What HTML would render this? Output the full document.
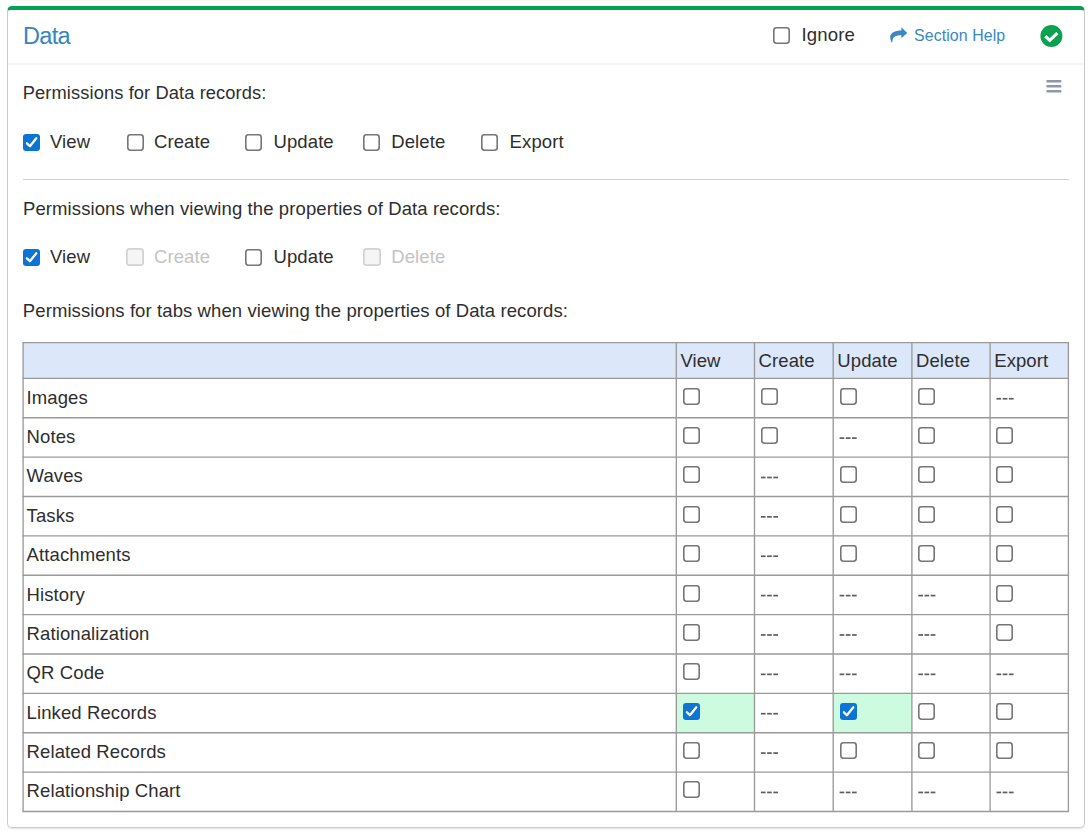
<!DOCTYPE html><html><head><meta charset="utf-8"><style>
html,body{margin:0;padding:0;background:#fff;width:1091px;height:835px;overflow:hidden;position:relative}
body{font-family:"Liberation Sans",sans-serif}
.t{position:absolute;white-space:nowrap;line-height:1;letter-spacing:0.1px}
.ic{position:absolute;display:block}
#card{position:absolute;left:7px;top:6px;width:1076px;height:817px;border:1px solid #cbcbcb;border-top:4px solid #04a152;border-radius:5px;box-shadow:0 1px 0 #ececec,0 2px 0 #f6f6f6}
#hdrline{position:absolute;left:8px;top:63px;width:1076px;height:2px;background:#f5f5f5}
#hr{position:absolute;left:23px;top:179px;width:1046px;height:1px;background:#d2d2d2}
.bar{position:absolute;left:1046.5px;width:15px;height:2.3px;background:#8990a6;border-radius:1px}
.cb{position:absolute;box-sizing:border-box;border:1.6px solid #767676;border-radius:3px;background:#fff}
.cb.dis{border-color:#d4d4d4;background:#f6f6f6}
.cb.on{border:none;background:#0b74d6}
.cb svg{display:block}
.dash{position:absolute;width:18px;height:1.4px;background:repeating-linear-gradient(90deg,#6a6a6a 0 5px,transparent 5px 6.5px)}
</style></head><body>
<div id="card"></div>
<div id="hdrline"></div>
<div class="t" style="left:23.00px;top:24.91px;font-size:23.5px;color:#3785bf;letter-spacing:-0.7px;">Data</div>
<svg class="ic" style="left:773px;top:27px" width="17" height="17" viewBox="0 0 17 17"><rect x="0.8" y="0.8" width="15.4" height="15.4" rx="2.6" fill="#fff" stroke="#767676" stroke-width="1.6"/></svg>
<div class="t" style="left:801.60px;top:25.86px;font-size:18.6px;color:#2e2e2e;">Ignore</div>
<svg class="ic" style="left:884px;top:22px" width="28" height="24" viewBox="0 0 28 24"><path d="M23.2 10.9 L17.4 5.3 L17.4 8.4 C11 8.4 6 10.5 6.2 15.5 C6.3 17.5 7 19.2 7.6 20.4 C8 20.6 8.4 20.4 8.4 20 C8.2 16 10.5 13.3 17.4 13.3 L17.4 16.2 Z" fill="#3a88c2"/></svg>
<div class="t" style="left:914.00px;top:27.54px;font-size:15.9px;color:#3a88c2;">Section Help</div>
<svg class="ic" style="left:1040px;top:25px" width="23" height="23" viewBox="0 0 23 23"><circle cx="11.4" cy="11" r="11" fill="#0aa24f"/><path d="M5.3 11.2 L9.7 15.3 L17.3 8.1" fill="none" stroke="#fff" stroke-width="3.2" stroke-linecap="butt" stroke-linejoin="miter"/></svg>
<svg class="ic" style="left:1040px;top:75px" width="30" height="22"><rect x="6.4" y="5.05" width="15" height="2.4" rx="0.6" fill="#8f97ab"/><rect x="6.4" y="10.05" width="15" height="2.4" rx="0.6" fill="#8f97ab"/><rect x="6.4" y="15.05" width="15" height="2.4" rx="0.6" fill="#8f97ab"/></svg>
<div style="position:absolute;left:11px;top:0;width:1070px;height:1px;background:#fafafa"></div>
<div class="t" style="left:22.80px;top:83.81px;font-size:18.3px;color:#2e2e2e;">Permissions for Data records:</div>
<div class="cb on" style="left:23px;top:134px;width:17px;height:17px"><svg width="17" height="17" viewBox="0 0 17 17"><path d="M3.9 9.3 L6.9 12.2 L13.3 4.3" fill="none" stroke="#fff" stroke-width="2.3" stroke-linecap="round" stroke-linejoin="round"/></svg></div>
<div class="t" style="left:50.00px;top:132.54px;font-size:18.5px;color:#2e2e2e;">View</div>
<svg class="ic" style="left:126.5px;top:134px" width="17" height="17" viewBox="0 0 17 17"><rect x="0.8" y="0.8" width="15.4" height="15.4" rx="2.6" fill="#fff" stroke="#767676" stroke-width="1.6"/></svg>
<div class="t" style="left:154.00px;top:132.54px;font-size:18.5px;color:#2e2e2e;">Create</div>
<svg class="ic" style="left:244.6px;top:134px" width="17" height="17" viewBox="0 0 17 17"><rect x="0.8" y="0.8" width="15.4" height="15.4" rx="2.6" fill="#fff" stroke="#767676" stroke-width="1.6"/></svg>
<div class="t" style="left:273.50px;top:132.54px;font-size:18.5px;color:#2e2e2e;">Update</div>
<svg class="ic" style="left:363.2px;top:134px" width="17" height="17" viewBox="0 0 17 17"><rect x="0.8" y="0.8" width="15.4" height="15.4" rx="2.6" fill="#fff" stroke="#767676" stroke-width="1.6"/></svg>
<div class="t" style="left:391.20px;top:132.54px;font-size:18.5px;color:#2e2e2e;">Delete</div>
<svg class="ic" style="left:481.3px;top:134px" width="17" height="17" viewBox="0 0 17 17"><rect x="0.8" y="0.8" width="15.4" height="15.4" rx="2.6" fill="#fff" stroke="#767676" stroke-width="1.6"/></svg>
<div class="t" style="left:509.60px;top:132.54px;font-size:18.5px;color:#2e2e2e;">Export</div>
<div id="hr"></div>
<div class="t" style="left:23.00px;top:199.74px;font-size:18.5px;color:#2e2e2e;">Permissions when viewing the properties of Data records:</div>
<div class="cb on" style="left:23px;top:249px;width:17px;height:17px"><svg width="17" height="17" viewBox="0 0 17 17"><path d="M3.9 9.3 L6.9 12.2 L13.3 4.3" fill="none" stroke="#fff" stroke-width="2.3" stroke-linecap="round" stroke-linejoin="round"/></svg></div>
<div class="t" style="left:50.00px;top:247.94px;font-size:18.5px;color:#2e2e2e;">View</div>
<svg class="ic" style="left:126px;top:248px" width="18" height="18" viewBox="0 0 17 17"><rect x="0.8" y="0.8" width="15.4" height="15.4" rx="2.6" fill="#f5f5f5" stroke="#d2d2d2" stroke-width="1.6"/></svg>
<div class="t" style="left:154.00px;top:247.94px;font-size:18.5px;color:#c4c4c4;">Create</div>
<svg class="ic" style="left:244.6px;top:249px" width="17" height="17" viewBox="0 0 17 17"><rect x="0.8" y="0.8" width="15.4" height="15.4" rx="2.6" fill="#fff" stroke="#767676" stroke-width="1.6"/></svg>
<div class="t" style="left:273.50px;top:247.94px;font-size:18.5px;color:#2e2e2e;">Update</div>
<svg class="ic" style="left:363px;top:248px" width="18" height="18" viewBox="0 0 17 17"><rect x="0.8" y="0.8" width="15.4" height="15.4" rx="2.6" fill="#f5f5f5" stroke="#d2d2d2" stroke-width="1.6"/></svg>
<div class="t" style="left:391.20px;top:247.94px;font-size:18.5px;color:#c4c4c4;">Delete</div>
<div class="t" style="left:22.80px;top:302.44px;font-size:18.5px;color:#2e2e2e;">Permissions for tabs when viewing the properties of Data records:</div>
<svg class="ic" style="left:0;top:0" width="1091" height="835" viewBox="0 0 1091 835"><rect x="23.1" y="342.6" width="1045.3000000000002" height="35.799999999999955" fill="#dce7fa"/><rect x="676.3" y="693.3599999999999" width="78.20000000000005" height="39.37" fill="#cdfbe0"/><rect x="833.2" y="693.3599999999999" width="78.69999999999993" height="39.37" fill="#cdfbe0"/><line x1="23.1" y1="342.6" x2="23.1" y2="811.47" stroke="#9a9a9a" stroke-width="1.35"/><line x1="676.3" y1="342.6" x2="676.3" y2="811.47" stroke="#9a9a9a" stroke-width="1.35"/><line x1="754.5" y1="342.6" x2="754.5" y2="811.47" stroke="#9a9a9a" stroke-width="1.35"/><line x1="833.2" y1="342.6" x2="833.2" y2="811.47" stroke="#9a9a9a" stroke-width="1.35"/><line x1="911.9" y1="342.6" x2="911.9" y2="811.47" stroke="#9a9a9a" stroke-width="1.35"/><line x1="990.1" y1="342.6" x2="990.1" y2="811.47" stroke="#9a9a9a" stroke-width="1.35"/><line x1="1068.4" y1="342.6" x2="1068.4" y2="811.47" stroke="#9a9a9a" stroke-width="1.35"/><line x1="22.425" y1="342.6" x2="1069.075" y2="342.6" stroke="#9a9a9a" stroke-width="1.35"/><line x1="22.425" y1="378.4" x2="1069.075" y2="378.4" stroke="#9a9a9a" stroke-width="1.35"/><line x1="22.425" y1="417.77" x2="1069.075" y2="417.77" stroke="#9a9a9a" stroke-width="1.35"/><line x1="22.425" y1="457.14" x2="1069.075" y2="457.14" stroke="#9a9a9a" stroke-width="1.35"/><line x1="22.425" y1="496.51" x2="1069.075" y2="496.51" stroke="#9a9a9a" stroke-width="1.35"/><line x1="22.425" y1="535.88" x2="1069.075" y2="535.88" stroke="#9a9a9a" stroke-width="1.35"/><line x1="22.425" y1="575.25" x2="1069.075" y2="575.25" stroke="#9a9a9a" stroke-width="1.35"/><line x1="22.425" y1="614.6199999999999" x2="1069.075" y2="614.6199999999999" stroke="#9a9a9a" stroke-width="1.35"/><line x1="22.425" y1="653.99" x2="1069.075" y2="653.99" stroke="#9a9a9a" stroke-width="1.35"/><line x1="22.425" y1="693.3599999999999" x2="1069.075" y2="693.3599999999999" stroke="#9a9a9a" stroke-width="1.35"/><line x1="22.425" y1="732.73" x2="1069.075" y2="732.73" stroke="#9a9a9a" stroke-width="1.35"/><line x1="22.425" y1="772.0999999999999" x2="1069.075" y2="772.0999999999999" stroke="#9a9a9a" stroke-width="1.35"/><line x1="22.425" y1="811.47" x2="1069.075" y2="811.47" stroke="#9a9a9a" stroke-width="1.35"/></svg>
<div class="t" style="left:680.40px;top:351.54px;font-size:18.5px;color:#2e2e2e;">View</div>
<div class="t" style="left:758.60px;top:351.54px;font-size:18.5px;color:#2e2e2e;">Create</div>
<div class="t" style="left:837.30px;top:351.54px;font-size:18.5px;color:#2e2e2e;">Update</div>
<div class="t" style="left:916.00px;top:351.54px;font-size:18.5px;color:#2e2e2e;">Delete</div>
<div class="t" style="left:994.20px;top:351.54px;font-size:18.5px;color:#2e2e2e;">Export</div>
<div class="t" style="left:26.60px;top:388.74px;font-size:18.5px;color:#2e2e2e;">Images</div>
<svg class="ic" style="left:683px;top:388px" width="17" height="17" viewBox="0 0 17 17"><rect x="0.8" y="0.8" width="15.4" height="15.4" rx="2.6" fill="#fff" stroke="#767676" stroke-width="1.6"/></svg>
<svg class="ic" style="left:761px;top:388px" width="17" height="17" viewBox="0 0 17 17"><rect x="0.8" y="0.8" width="15.4" height="15.4" rx="2.6" fill="#fff" stroke="#767676" stroke-width="1.6"/></svg>
<svg class="ic" style="left:840px;top:388px" width="17" height="17" viewBox="0 0 17 17"><rect x="0.8" y="0.8" width="15.4" height="15.4" rx="2.6" fill="#fff" stroke="#767676" stroke-width="1.6"/></svg>
<svg class="ic" style="left:918px;top:388px" width="17" height="17" viewBox="0 0 17 17"><rect x="0.8" y="0.8" width="15.4" height="15.4" rx="2.6" fill="#fff" stroke="#767676" stroke-width="1.6"/></svg>
<div class="t" style="left:26.60px;top:428.11px;font-size:18.5px;color:#2e2e2e;">Notes</div>
<svg class="ic" style="left:683px;top:427px" width="17" height="17" viewBox="0 0 17 17"><rect x="0.8" y="0.8" width="15.4" height="15.4" rx="2.6" fill="#fff" stroke="#767676" stroke-width="1.6"/></svg>
<svg class="ic" style="left:761px;top:427px" width="17" height="17" viewBox="0 0 17 17"><rect x="0.8" y="0.8" width="15.4" height="15.4" rx="2.6" fill="#fff" stroke="#767676" stroke-width="1.6"/></svg>
<svg class="ic" style="left:918px;top:427px" width="17" height="17" viewBox="0 0 17 17"><rect x="0.8" y="0.8" width="15.4" height="15.4" rx="2.6" fill="#fff" stroke="#767676" stroke-width="1.6"/></svg>
<svg class="ic" style="left:996px;top:427px" width="17" height="17" viewBox="0 0 17 17"><rect x="0.8" y="0.8" width="15.4" height="15.4" rx="2.6" fill="#fff" stroke="#767676" stroke-width="1.6"/></svg>
<div class="t" style="left:26.60px;top:467.48px;font-size:18.5px;color:#2e2e2e;">Waves</div>
<svg class="ic" style="left:683px;top:466px" width="17" height="17" viewBox="0 0 17 17"><rect x="0.8" y="0.8" width="15.4" height="15.4" rx="2.6" fill="#fff" stroke="#767676" stroke-width="1.6"/></svg>
<svg class="ic" style="left:840px;top:466px" width="17" height="17" viewBox="0 0 17 17"><rect x="0.8" y="0.8" width="15.4" height="15.4" rx="2.6" fill="#fff" stroke="#767676" stroke-width="1.6"/></svg>
<svg class="ic" style="left:918px;top:466px" width="17" height="17" viewBox="0 0 17 17"><rect x="0.8" y="0.8" width="15.4" height="15.4" rx="2.6" fill="#fff" stroke="#767676" stroke-width="1.6"/></svg>
<svg class="ic" style="left:996px;top:466px" width="17" height="17" viewBox="0 0 17 17"><rect x="0.8" y="0.8" width="15.4" height="15.4" rx="2.6" fill="#fff" stroke="#767676" stroke-width="1.6"/></svg>
<div class="t" style="left:26.60px;top:506.85px;font-size:18.5px;color:#2e2e2e;">Tasks</div>
<svg class="ic" style="left:683px;top:506px" width="17" height="17" viewBox="0 0 17 17"><rect x="0.8" y="0.8" width="15.4" height="15.4" rx="2.6" fill="#fff" stroke="#767676" stroke-width="1.6"/></svg>
<svg class="ic" style="left:840px;top:506px" width="17" height="17" viewBox="0 0 17 17"><rect x="0.8" y="0.8" width="15.4" height="15.4" rx="2.6" fill="#fff" stroke="#767676" stroke-width="1.6"/></svg>
<svg class="ic" style="left:918px;top:506px" width="17" height="17" viewBox="0 0 17 17"><rect x="0.8" y="0.8" width="15.4" height="15.4" rx="2.6" fill="#fff" stroke="#767676" stroke-width="1.6"/></svg>
<svg class="ic" style="left:996px;top:506px" width="17" height="17" viewBox="0 0 17 17"><rect x="0.8" y="0.8" width="15.4" height="15.4" rx="2.6" fill="#fff" stroke="#767676" stroke-width="1.6"/></svg>
<div class="t" style="left:26.60px;top:546.22px;font-size:18.5px;color:#2e2e2e;">Attachments</div>
<svg class="ic" style="left:683px;top:545px" width="17" height="17" viewBox="0 0 17 17"><rect x="0.8" y="0.8" width="15.4" height="15.4" rx="2.6" fill="#fff" stroke="#767676" stroke-width="1.6"/></svg>
<svg class="ic" style="left:840px;top:545px" width="17" height="17" viewBox="0 0 17 17"><rect x="0.8" y="0.8" width="15.4" height="15.4" rx="2.6" fill="#fff" stroke="#767676" stroke-width="1.6"/></svg>
<svg class="ic" style="left:918px;top:545px" width="17" height="17" viewBox="0 0 17 17"><rect x="0.8" y="0.8" width="15.4" height="15.4" rx="2.6" fill="#fff" stroke="#767676" stroke-width="1.6"/></svg>
<svg class="ic" style="left:996px;top:545px" width="17" height="17" viewBox="0 0 17 17"><rect x="0.8" y="0.8" width="15.4" height="15.4" rx="2.6" fill="#fff" stroke="#767676" stroke-width="1.6"/></svg>
<div class="t" style="left:26.60px;top:585.59px;font-size:18.5px;color:#2e2e2e;">History</div>
<svg class="ic" style="left:683px;top:585px" width="17" height="17" viewBox="0 0 17 17"><rect x="0.8" y="0.8" width="15.4" height="15.4" rx="2.6" fill="#fff" stroke="#767676" stroke-width="1.6"/></svg>
<svg class="ic" style="left:996px;top:585px" width="17" height="17" viewBox="0 0 17 17"><rect x="0.8" y="0.8" width="15.4" height="15.4" rx="2.6" fill="#fff" stroke="#767676" stroke-width="1.6"/></svg>
<div class="t" style="left:26.60px;top:624.96px;font-size:18.5px;color:#2e2e2e;">Rationalization</div>
<svg class="ic" style="left:683px;top:624px" width="17" height="17" viewBox="0 0 17 17"><rect x="0.8" y="0.8" width="15.4" height="15.4" rx="2.6" fill="#fff" stroke="#767676" stroke-width="1.6"/></svg>
<svg class="ic" style="left:996px;top:624px" width="17" height="17" viewBox="0 0 17 17"><rect x="0.8" y="0.8" width="15.4" height="15.4" rx="2.6" fill="#fff" stroke="#767676" stroke-width="1.6"/></svg>
<div class="t" style="left:26.60px;top:664.33px;font-size:18.5px;color:#2e2e2e;">QR Code</div>
<svg class="ic" style="left:683px;top:663px" width="17" height="17" viewBox="0 0 17 17"><rect x="0.8" y="0.8" width="15.4" height="15.4" rx="2.6" fill="#fff" stroke="#767676" stroke-width="1.6"/></svg>
<div class="t" style="left:26.60px;top:703.70px;font-size:18.5px;color:#2e2e2e;">Linked Records</div>
<div class="cb on" style="left:683px;top:703px;width:17px;height:17px"><svg width="17" height="17" viewBox="0 0 17 17"><path d="M3.9 9.3 L6.9 12.2 L13.3 4.3" fill="none" stroke="#fff" stroke-width="2.3" stroke-linecap="round" stroke-linejoin="round"/></svg></div>
<div class="cb on" style="left:840px;top:703px;width:17px;height:17px"><svg width="17" height="17" viewBox="0 0 17 17"><path d="M3.9 9.3 L6.9 12.2 L13.3 4.3" fill="none" stroke="#fff" stroke-width="2.3" stroke-linecap="round" stroke-linejoin="round"/></svg></div>
<svg class="ic" style="left:918px;top:703px" width="17" height="17" viewBox="0 0 17 17"><rect x="0.8" y="0.8" width="15.4" height="15.4" rx="2.6" fill="#fff" stroke="#767676" stroke-width="1.6"/></svg>
<svg class="ic" style="left:996px;top:703px" width="17" height="17" viewBox="0 0 17 17"><rect x="0.8" y="0.8" width="15.4" height="15.4" rx="2.6" fill="#fff" stroke="#767676" stroke-width="1.6"/></svg>
<div class="t" style="left:26.60px;top:743.07px;font-size:18.5px;color:#2e2e2e;">Related Records</div>
<svg class="ic" style="left:683px;top:742px" width="17" height="17" viewBox="0 0 17 17"><rect x="0.8" y="0.8" width="15.4" height="15.4" rx="2.6" fill="#fff" stroke="#767676" stroke-width="1.6"/></svg>
<svg class="ic" style="left:840px;top:742px" width="17" height="17" viewBox="0 0 17 17"><rect x="0.8" y="0.8" width="15.4" height="15.4" rx="2.6" fill="#fff" stroke="#767676" stroke-width="1.6"/></svg>
<svg class="ic" style="left:918px;top:742px" width="17" height="17" viewBox="0 0 17 17"><rect x="0.8" y="0.8" width="15.4" height="15.4" rx="2.6" fill="#fff" stroke="#767676" stroke-width="1.6"/></svg>
<svg class="ic" style="left:996px;top:742px" width="17" height="17" viewBox="0 0 17 17"><rect x="0.8" y="0.8" width="15.4" height="15.4" rx="2.6" fill="#fff" stroke="#767676" stroke-width="1.6"/></svg>
<div class="t" style="left:26.60px;top:782.44px;font-size:18.5px;color:#2e2e2e;">Relationship Chart</div>
<svg class="ic" style="left:683px;top:781px" width="17" height="17" viewBox="0 0 17 17"><rect x="0.8" y="0.8" width="15.4" height="15.4" rx="2.6" fill="#fff" stroke="#767676" stroke-width="1.6"/></svg>
<svg class="ic" style="left:0;top:0" width="1091" height="835"><rect x="996.50" y="397.90" width="4.7" height="1.7" fill="#5e5e5e"/><rect x="1002.70" y="397.90" width="4.7" height="1.7" fill="#5e5e5e"/><rect x="1008.90" y="397.90" width="4.7" height="1.7" fill="#5e5e5e"/><rect x="839.60" y="437.27" width="4.7" height="1.7" fill="#5e5e5e"/><rect x="845.80" y="437.27" width="4.7" height="1.7" fill="#5e5e5e"/><rect x="852.00" y="437.27" width="4.7" height="1.7" fill="#5e5e5e"/><rect x="760.90" y="476.64" width="4.7" height="1.7" fill="#5e5e5e"/><rect x="767.10" y="476.64" width="4.7" height="1.7" fill="#5e5e5e"/><rect x="773.30" y="476.64" width="4.7" height="1.7" fill="#5e5e5e"/><rect x="760.90" y="516.01" width="4.7" height="1.7" fill="#5e5e5e"/><rect x="767.10" y="516.01" width="4.7" height="1.7" fill="#5e5e5e"/><rect x="773.30" y="516.01" width="4.7" height="1.7" fill="#5e5e5e"/><rect x="760.90" y="555.38" width="4.7" height="1.7" fill="#5e5e5e"/><rect x="767.10" y="555.38" width="4.7" height="1.7" fill="#5e5e5e"/><rect x="773.30" y="555.38" width="4.7" height="1.7" fill="#5e5e5e"/><rect x="760.90" y="594.75" width="4.7" height="1.7" fill="#5e5e5e"/><rect x="767.10" y="594.75" width="4.7" height="1.7" fill="#5e5e5e"/><rect x="773.30" y="594.75" width="4.7" height="1.7" fill="#5e5e5e"/><rect x="839.60" y="594.75" width="4.7" height="1.7" fill="#5e5e5e"/><rect x="845.80" y="594.75" width="4.7" height="1.7" fill="#5e5e5e"/><rect x="852.00" y="594.75" width="4.7" height="1.7" fill="#5e5e5e"/><rect x="918.30" y="594.75" width="4.7" height="1.7" fill="#5e5e5e"/><rect x="924.50" y="594.75" width="4.7" height="1.7" fill="#5e5e5e"/><rect x="930.70" y="594.75" width="4.7" height="1.7" fill="#5e5e5e"/><rect x="760.90" y="634.12" width="4.7" height="1.7" fill="#5e5e5e"/><rect x="767.10" y="634.12" width="4.7" height="1.7" fill="#5e5e5e"/><rect x="773.30" y="634.12" width="4.7" height="1.7" fill="#5e5e5e"/><rect x="839.60" y="634.12" width="4.7" height="1.7" fill="#5e5e5e"/><rect x="845.80" y="634.12" width="4.7" height="1.7" fill="#5e5e5e"/><rect x="852.00" y="634.12" width="4.7" height="1.7" fill="#5e5e5e"/><rect x="918.30" y="634.12" width="4.7" height="1.7" fill="#5e5e5e"/><rect x="924.50" y="634.12" width="4.7" height="1.7" fill="#5e5e5e"/><rect x="930.70" y="634.12" width="4.7" height="1.7" fill="#5e5e5e"/><rect x="760.90" y="673.49" width="4.7" height="1.7" fill="#5e5e5e"/><rect x="767.10" y="673.49" width="4.7" height="1.7" fill="#5e5e5e"/><rect x="773.30" y="673.49" width="4.7" height="1.7" fill="#5e5e5e"/><rect x="839.60" y="673.49" width="4.7" height="1.7" fill="#5e5e5e"/><rect x="845.80" y="673.49" width="4.7" height="1.7" fill="#5e5e5e"/><rect x="852.00" y="673.49" width="4.7" height="1.7" fill="#5e5e5e"/><rect x="918.30" y="673.49" width="4.7" height="1.7" fill="#5e5e5e"/><rect x="924.50" y="673.49" width="4.7" height="1.7" fill="#5e5e5e"/><rect x="930.70" y="673.49" width="4.7" height="1.7" fill="#5e5e5e"/><rect x="996.50" y="673.49" width="4.7" height="1.7" fill="#5e5e5e"/><rect x="1002.70" y="673.49" width="4.7" height="1.7" fill="#5e5e5e"/><rect x="1008.90" y="673.49" width="4.7" height="1.7" fill="#5e5e5e"/><rect x="760.90" y="712.86" width="4.7" height="1.7" fill="#5e5e5e"/><rect x="767.10" y="712.86" width="4.7" height="1.7" fill="#5e5e5e"/><rect x="773.30" y="712.86" width="4.7" height="1.7" fill="#5e5e5e"/><rect x="760.90" y="752.23" width="4.7" height="1.7" fill="#5e5e5e"/><rect x="767.10" y="752.23" width="4.7" height="1.7" fill="#5e5e5e"/><rect x="773.30" y="752.23" width="4.7" height="1.7" fill="#5e5e5e"/><rect x="760.90" y="791.60" width="4.7" height="1.7" fill="#5e5e5e"/><rect x="767.10" y="791.60" width="4.7" height="1.7" fill="#5e5e5e"/><rect x="773.30" y="791.60" width="4.7" height="1.7" fill="#5e5e5e"/><rect x="839.60" y="791.60" width="4.7" height="1.7" fill="#5e5e5e"/><rect x="845.80" y="791.60" width="4.7" height="1.7" fill="#5e5e5e"/><rect x="852.00" y="791.60" width="4.7" height="1.7" fill="#5e5e5e"/><rect x="918.30" y="791.60" width="4.7" height="1.7" fill="#5e5e5e"/><rect x="924.50" y="791.60" width="4.7" height="1.7" fill="#5e5e5e"/><rect x="930.70" y="791.60" width="4.7" height="1.7" fill="#5e5e5e"/><rect x="996.50" y="791.60" width="4.7" height="1.7" fill="#5e5e5e"/><rect x="1002.70" y="791.60" width="4.7" height="1.7" fill="#5e5e5e"/><rect x="1008.90" y="791.60" width="4.7" height="1.7" fill="#5e5e5e"/></svg>
</body></html>
